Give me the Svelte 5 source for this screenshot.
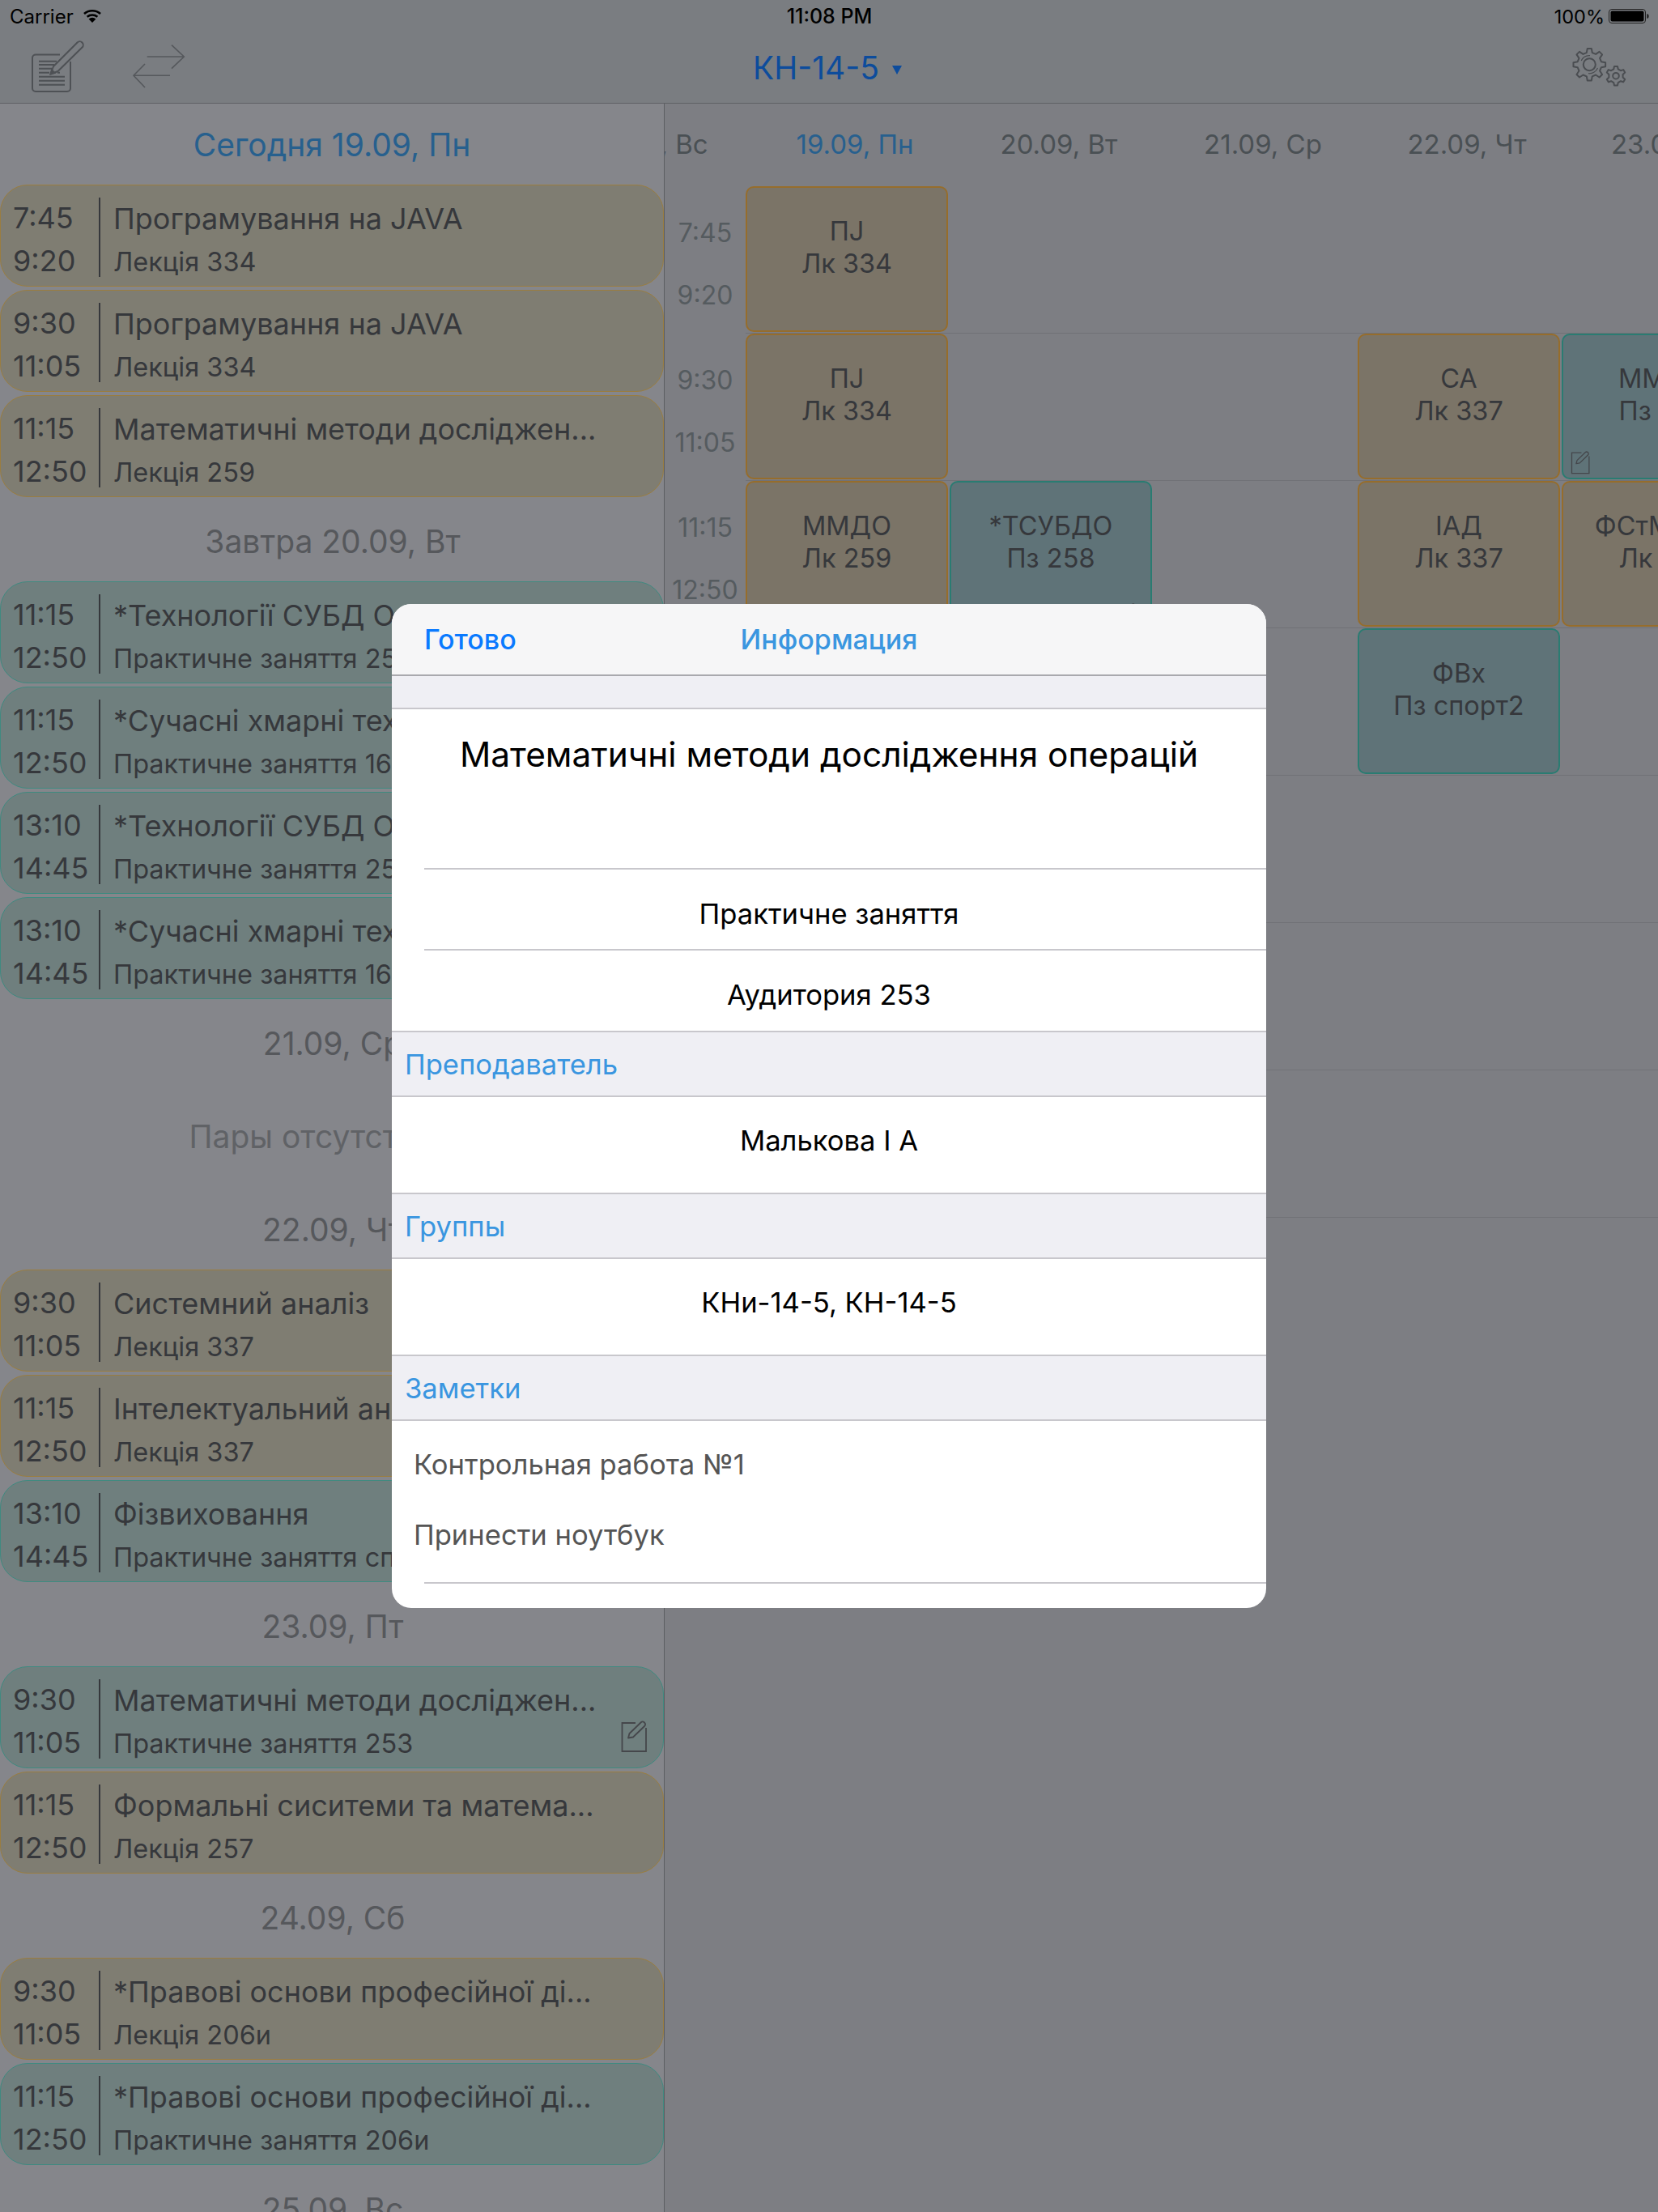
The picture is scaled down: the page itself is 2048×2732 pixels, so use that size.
<script>
    const days = [
        { label: 'Сегодня 19.09, Пн', today: true, lessons: [
            { from: '7:45', to: '9:20', title: 'Програмування на JAVA', sub: 'Лекція 334', kind: 'lec' },
            { from: '9:30', to: '11:05', title: 'Програмування на JAVA', sub: 'Лекція 334', kind: 'lec' },
            { from: '11:15', to: '12:50', title: 'Математичні методи досліджен...', sub: 'Лекція 259', kind: 'lec' }
        ]},
        { label: 'Завтра 20.09, Вт', lessons: [
            { from: '11:15', to: '12:50', title: '*Технології СУБД Oracle', sub: 'Практичне заняття 258', kind: 'prac' },
            { from: '11:15', to: '12:50', title: '*Сучасні хмарні технології', sub: 'Практичне заняття 160', kind: 'prac' },
            { from: '13:10', to: '14:45', title: '*Технології СУБД Oracle', sub: 'Практичне заняття 258', kind: 'prac' },
            { from: '13:10', to: '14:45', title: '*Сучасні хмарні технології', sub: 'Практичне заняття 160', kind: 'prac' }
        ]},
        { label: '21.09, Ср', empty: true, lessons: [] },
        { label: '22.09, Чт', lessons: [
            { from: '9:30', to: '11:05', title: 'Системний аналіз', sub: 'Лекція 337', kind: 'lec' },
            { from: '11:15', to: '12:50', title: 'Інтелектуальний аналіз даних', sub: 'Лекція 337', kind: 'lec' },
            { from: '13:10', to: '14:45', title: 'Фізвиховання', sub: 'Практичне заняття спорт2', kind: 'prac' }
        ]},
        { label: '23.09, Пт', lessons: [
            { from: '9:30', to: '11:05', title: 'Математичні методи досліджен...', sub: 'Практичне заняття 253', kind: 'prac', note: true },
            { from: '11:15', to: '12:50', title: 'Формальні сиситеми та матема...', sub: 'Лекція 257', kind: 'lec' }
        ]},
        { label: '24.09, Сб', lessons: [
            { from: '9:30', to: '11:05', title: '*Правові основи професійної ді...', sub: 'Лекція 206и', kind: 'lec' },
            { from: '11:15', to: '12:50', title: '*Правові основи професійної ді...', sub: 'Практичне заняття 206и', kind: 'prac' }
        ]},
        { label: '25.09, Вс', lessons: [] }
    ];

    const heads = ['18.09, Вс', '19.09, Пн', '20.09, Вт', '21.09, Ср', '22.09, Чт', '23.09, Пт'];

    const lec = (a, b) => ({ a, b, kind: 'lec' });
    const prac = (a, b, note) => ({ a, b, kind: 'prac', note });

    const rows = [
        { times: ['7:45', '9:20'], slots: [lec('ПJ', 'Лк 334'), null, null, null, null] },
        { times: ['9:30', '11:05'], slots: [lec('ПJ', 'Лк 334'), null, null, lec('СА', 'Лк 337'), prac('ММДО', 'Пз 253', 'left')] },
        { times: ['11:15', '12:50'], slots: [lec('ММДО', 'Лк 259'), prac('*ТСУБДО', 'Пз 258', 'right'), null, lec('ІАД', 'Лк 337'), lec('ФСтМЛіТА', 'Лк 257')] },
        { times: ['13:10', '14:45'], slots: [null, prac('*ТСУБДО', 'Пз 258'), null, prac('ФВх', 'Пз спорт2'), null] },
        { times: [], slots: [null, null, null, null, null] },
        { times: [], slots: [null, null, null, null, null] },
        { times: [], slots: [null, null, null, null, null] }
    ];

    // gear outline with rounded-looking teeth, strokes do the rounding
    function gear(cx, cy, outer, inner, teeth) {
        const step = (Math.PI * 2) / teeth;
        let d = '';
        for (let i = 0; i < teeth; i++) {
            const t = i * step - Math.PI / 2;
            const pts = [
                [inner, t - step * 0.3],
                [outer, t - step * 0.16],
                [outer, t + step * 0.16],
                [inner, t + step * 0.3]
            ];
            for (const [r, a] of pts) {
                d += (d ? 'L' : 'M') + (cx + r * Math.cos(a)).toFixed(1) + ' ' + (cy + r * Math.sin(a)).toFixed(1);
            }
        }
        return d + 'Z';
    }
</script>

{#snippet noteIcon()}
    <svg class="note-svg" viewBox="0 0 32 40" fill="none" stroke="currentColor" stroke-width="1.8">
        <path d="M18 3H1.5V38H31V9" />
        <path d="M9 21.5L10.5 16L24.5 2.5C26 1 27.5 1 29 2.5C30.5 4 30.5 5.5 29 7L15 20.5Z" stroke-linejoin="round" />
    </svg>
{/snippet}

<div class="page">
    <header class="top">
        <div class="status">
            <div class="status-left">
                <span>Carrier</span>
                <svg width="26" height="18" viewBox="0 0 26 18" fill="none" stroke="#000" stroke-width="2.6">
                    <path d="M3 6A15 15 0 0 1 23 6" />
                    <path d="M6.6 9.8A10.5 10.5 0 0 1 19.4 9.8" />
                    <path d="M13 17L8.6 12.6A6.4 6.4 0 0 1 17.4 12.6Z" fill="#000" stroke="none" />
                </svg>
            </div>
            <span class="clock">11:08 PM</span>
            <div class="status-right">
                <span>100%</span>
                <svg width="50" height="20" viewBox="0 0 50 20">
                    <rect x="0.5" y="1.5" width="45" height="17" rx="3.5" fill="none" stroke="#222" />
                    <rect x="2.5" y="3.5" width="41" height="13" rx="2" fill="#000" />
                    <path d="M47.5 7C49 7.4 49.5 8.5 49.5 10S49 12.6 47.5 13Z" fill="#111" />
                </svg>
            </div>
        </div>
        <nav class="nav">
            <div class="nav-left">
                <svg class="ico" width="70" height="70" viewBox="0 0 70 70" fill="none" stroke="#4e5155" stroke-width="2">
                    <path d="M38 18.5H8A4 4 0 0 0 4 22.5V60A4 4 0 0 0 8 64H47A4 4 0 0 0 51 60V27" />
                    <path d="M12 26.7H34M12 31H31M12 35.7H28M12 40.7H25M35 40.7H38M12 45.7H44M12 50.7H44M12 55.7H44" />
                    <path d="M26.5 42.5L30 33L59.5 3.5A4 4 0 0 1 65.5 9.5L35.5 39Z" stroke-linejoin="round" />
                    <path d="M26.5 42.5L28 37.5L31.5 41Z" fill="#4e5155" />
                </svg>
                <svg class="ico" width="72" height="70" viewBox="0 0 72 70" fill="none" stroke="#55585c" stroke-width="1.6">
                    <path d="M21.7 21H67M52 6.7L67.3 21L52 35.7" />
                    <path d="M50 44.3H5M19 30L5 44.3L19 59" />
                </svg>
            </div>
            <div class="group">
                <span>КН-14-5</span>
                <i class="caret"></i>
            </div>
            <svg class="ico gears" width="72" height="70" viewBox="0 0 72 70" fill="none" stroke="#4a4d51" stroke-width="2" stroke-linejoin="round">
                <path d={gear(23.3, 30.7, 20, 15, 8)} />
                <circle cx="23.3" cy="30.7" r="7.5" />
                <path d="M13.2 26A11 11 0 0 1 24 19.7M33.5 35A11 11 0 0 1 22 41.7" stroke-width="1.2" />
                <path d={gear(56, 44.7, 12, 8.8, 6)} />
                <circle cx="56" cy="44.7" r="3.8" />
            </svg>
        </nav>
    </header>

    <main class="body">
        <section class="list">
            {#each days as day}
                <div class="day-head" class:today={day.today}>{day.label}</div>
                {#if day.empty}
                    <div class="no-lessons">Пары отсутствуют</div>
                {/if}
                {#each day.lessons as l}
                    <div class="lesson {l.kind}">
                        <div class="times">
                            <span>{l.from}</span>
                            <span>{l.to}</span>
                        </div>
                        <div class="rule"></div>
                        <div class="texts">
                            <div class="title">{l.title}</div>
                            <div class="sub">{l.sub}</div>
                        </div>
                        {#if l.note}
                            <div class="lesson-note">{@render noteIcon()}</div>
                        {/if}
                    </div>
                {/each}
            {/each}
        </section>

        <section class="week">
            <div class="week-head">
                {#each heads as h, i}
                    <div class="week-day" class:today={i == 1}>{h}</div>
                {/each}
            </div>
            {#each rows as row}
                <div class="row">
                    <div class="hours">
                        {#each row.times as t}
                            <span>{t}</span>
                        {/each}
                    </div>
                    <div class="slots">
                        {#each row.slots as s}
                            <div class="slot">
                                {#if s}
                                    <div class="block {s.kind}">
                                        <span>{s.a}</span>
                                        <span>{s.b}</span>
                                        {#if s.note}
                                            <div class="block-note {s.note}">{@render noteIcon()}</div>
                                        {/if}
                                    </div>
                                {/if}
                            </div>
                        {/each}
                    </div>
                </div>
            {/each}
        </section>
    </main>

    <div class="modal">
        <div class="modal-bar">
            <span class="done">Готово</span>
            <span class="modal-title">Информация</span>
        </div>
        <div class="band"></div>
        <div class="cell subject">Математичні методи дослідження операцій</div>
        <div class="cell info">Практичне заняття</div>
        <div class="cell info last">Аудитория 253</div>
        <div class="sec">Преподаватель</div>
        <div class="cell plain">Малькова І А</div>
        <div class="sec">Группы</div>
        <div class="cell plain">КНи-14-5, КН-14-5</div>
        <div class="sec">Заметки</div>
        <div class="notes">
            <p>Контрольная работа №1</p>
            <p>Принести ноутбук</p>
        </div>
    </div>
</div>

<style>
    :global(body) {
        margin: 0;
    }

    .page {
        position: relative;
        width: 2048px;
        height: 2732px;
        overflow: hidden;
        background: #7d7e83;
        font-family: Inter, "Noto Sans", sans-serif;
        color: #36383c;
    }

    .top {
        background: #7a7d81;
        border-bottom: 1px solid #5f6165;
    }

    .status {
        height: 40px;
        padding: 0 11px 0 12px;
        display: flex;
        justify-content: space-between;
        align-items: center;
        font-size: 24px;
        color: #000;
    }

    .status-left,
    .status-right {
        width: 300px;
        display: flex;
        align-items: center;
        gap: 10px;
    }

    .status-right {
        justify-content: flex-end;
        gap: 5px;
        font-size: 23.5px;
    }

    .clock {
        font-size: 25px;
        font-weight: 500;
    }

    .nav {
        height: 87px;
        padding: 0 36px;
        display: grid;
        grid-template-columns: 1fr auto 1fr;
        align-items: center;
    }

    .nav-left {
        display: flex;
        gap: 54px;
    }

    .ico {
        display: block;
    }

    .gears {
        justify-self: end;
    }

    .group {
        margin-left: -4px;
        display: flex;
        align-items: center;
        gap: 16px;
        font-size: 39px;
        color: #0d4c9c;
    }

    .caret {
        width: 0;
        height: 0;
        margin-top: 5px;
        border-left: 6px solid transparent;
        border-right: 6px solid transparent;
        border-top: 11px solid #0d4c9c;
    }

    .body {
        display: flex;
    }

    .list {
        width: 820px;
        height: 2604px;
        flex: none;
        overflow: hidden;
        background: #85868b;
        border-right: 1px solid #5c5e62;
    }

    .day-head {
        height: 100px;
        padding-left: 2px;
        display: flex;
        align-items: center;
        justify-content: center;
        font-size: 39px;
        color: #56585c;
    }

    .day-head.today {
        padding-left: 0;
        color: #27608e;
    }

    .no-lessons {
        height: 130px;
        display: flex;
        align-items: center;
        justify-content: center;
        font-size: 39px;
        color: #606266;
    }

    .lesson {
        position: relative;
        height: 126px;
        margin-bottom: 4px;
        box-sizing: border-box;
        border: 1px solid;
        border-radius: 34px;
        display: flex;
    }

    .lesson.lec {
        background: #7f7d72;
        border-color: #9a7d40;
    }

    .lesson.prac {
        background: #6f7f7e;
        border-color: #3f8a80;
    }

    .times {
        width: 121px;
        flex: none;
        padding: 14px 0 0 15px;
        box-sizing: border-box;
        font-size: 36px;
        line-height: 53px;
        display: flex;
        flex-direction: column;
    }

    .rule {
        width: 2px;
        height: 98px;
        margin-top: 15px;
        flex: none;
        background: #36383c;
    }

    .texts {
        min-width: 0;
        flex: 1;
        padding: 16px 40px 0 16px;
    }

    .title {
        font-size: 36px;
        line-height: 51px;
        white-space: nowrap;
        overflow: hidden;
        text-overflow: ellipsis;
    }

    .sub {
        font-size: 32.5px;
        line-height: 55px;
    }

    .lesson-note {
        position: absolute;
        right: 20px;
        bottom: 18px;
        width: 32px;
        height: 40px;
        color: #45474b;
    }

    .note-svg {
        display: block;
        width: 100%;
        height: 100%;
    }

    .week {
        flex: 1;
        min-width: 0;
        overflow: hidden;
    }

    .week-head {
        height: 102px;
        box-sizing: border-box;
        padding-bottom: 2px;
        margin-left: -143px;
        display: flex;
    }

    .week-day {
        width: 252px;
        flex: none;
        display: flex;
        align-items: center;
        justify-content: center;
        font-size: 33px;
        color: #4a5054;
    }

    .week-day.today {
        color: #27608e;
    }

    .row {
        height: 182px;
        display: flex;
    }

    .hours {
        width: 100px;
        flex: none;
        padding-top: 38px;
        display: flex;
        flex-direction: column;
        align-items: center;
        gap: 37px;
        font-size: 32px;
        line-height: 40px;
        color: #555b5f;
    }

    .slots {
        flex: 1;
        display: flex;
        gap: 2px;
        box-sizing: border-box;
        border-bottom: 1px solid #707176;
    }

    .slot {
        width: 250px;
        height: 180px;
        flex: none;
    }

    .block {
        position: relative;
        height: 100%;
        box-sizing: border-box;
        padding-top: 34px;
        border: 2px solid;
        border-radius: 10px;
        display: flex;
        flex-direction: column;
        align-items: center;
        font-size: 32.5px;
        line-height: 40px;
        white-space: nowrap;
    }

    .block.lec {
        background: #7b7467;
        border-color: #966d2c;
    }

    .block.prac {
        background: #5f7378;
        border-color: #2a7c72;
    }

    .block-note {
        position: absolute;
        top: 143px;
        width: 24px;
        height: 29px;
        color: #45474b;
    }

    .block-note.left {
        left: 9px;
    }

    .block-note.right {
        top: 149px;
        right: 17px;
    }

    .modal {
        position: absolute;
        left: 484px;
        top: 746px;
        width: 1080px;
        height: 1240px;
        border-radius: 24px;
        overflow: hidden;
        background: #fff;
        color: #000;
        font-size: 34.6px;
    }

    .modal-bar {
        position: relative;
        height: 89px;
        box-sizing: border-box;
        padding-left: 40px;
        display: flex;
        align-items: center;
        font-size: 34px;
        background: #f6f6f7;
        border-bottom: 2px solid #a9a9ae;
    }

    .done {
        color: #0a7aff;
        font-weight: 500;
    }

    .modal-title {
        position: absolute;
        left: 0;
        right: 0;
        text-align: center;
        font-weight: 500;
        color: #3a96e0;
    }

    .band {
        height: 39px;
        background: #efeff4;
        border-bottom: 2px solid #c8c7cc;
    }

    .cell {
        display: flex;
        justify-content: center;
        box-sizing: border-box;
    }

    .subject {
        height: 198px;
        padding-top: 26px;
        font-size: 42.4px;
        line-height: 60px;
        position: relative;
    }

    .subject::after,
    .info::after {
        content: "";
        position: absolute;
        left: 40px;
        right: 0;
        bottom: 0;
        height: 2px;
        background: #c8c7cc;
    }

    .info {
        position: relative;
        height: 100px;
        align-items: center;
        padding-top: 8px;
    }

    .info.last {
        height: 99px;
    }

    .info.last::after {
        display: none;
    }

    .plain {
        height: 118px;
        padding-top: 30px;
        line-height: 46px;
    }

    .sec {
        height: 82px;
        box-sizing: border-box;
        padding: 0 0 0 16px;
        display: flex;
        align-items: center;
        background: #efeff4;
        border-top: 2px solid #c8c7cc;
        border-bottom: 2px solid #c8c7cc;
        color: #3a96e0;
    }

    .notes {
        position: relative;
        height: 201px;
        box-sizing: border-box;
        padding: 30px 0 0 27px;
        color: #555;
    }

    .notes::after {
        content: "";
        position: absolute;
        left: 40px;
        right: 0;
        bottom: 0;
        height: 2px;
        background: #c8c7cc;
    }

    .notes p {
        margin: 0 0 41px;
        line-height: 46px;
    }
</style>
